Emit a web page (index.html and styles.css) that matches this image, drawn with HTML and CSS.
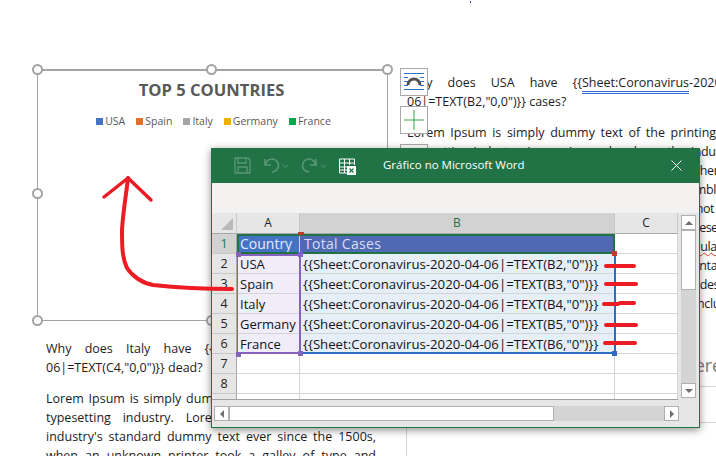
FILE: index.html
```html
<!DOCTYPE html>
<html lang="pt">
<head>
<meta charset="utf-8">
<title>Gráfico no Microsoft Word</title>
<link rel="stylesheet" href="styles.css">
</head>
<body>
<div class="page">
  <span class="dot"></span>
  <main class="doc">
    <section class="col">
      <figure class="chart">
        <h2 class="chart-title">TOP 5 COUNTRIES</h2>
        <ul class="legend">
          <li><i class="sw s1"></i>USA</li>
          <li><i class="sw s2"></i>Spain</li>
          <li><i class="sw s3"></i>Italy</li>
          <li><i class="sw s4"></i>Germany</li>
          <li><i class="sw s5"></i>France</li>
        </ul>
        <i class="h h-tl"></i><i class="h h-tc"></i><i class="h h-tr"></i>
        <i class="h h-ml"></i><i class="h h-bl"></i><i class="h h-bc"></i>
        <div class="tools">
          <div class="tool">
            <svg width="26" height="26" viewBox="0 0 26 26"><path d="M3 4.500h20M3 8.500h4M19 8.500h4M3 12.500h4M19 12.500h4M3 16.500h4M19 16.500h4M3 20.500h20" stroke="#2f75c5" stroke-width="1" fill="none"/><path d="M7 16a6 6 0 0 1 12 0" stroke="#505050" stroke-width="3" fill="none"/></svg>
          </div>
          <div class="tool">
            <svg width="26" height="26" viewBox="0 0 26 26"><path d="M13 3v20M3 13h20" stroke="#3fa14a" stroke-width="1" fill="none"/></svg>
          </div>
          <div class="tool"></div>
        </div>
      </figure>
      <p class="just">Why does Italy have {{Sheet:Coronavirus-2020-04-06|=TEXT(C4,"0,0")}} dead?</p>
      <p class="just">Lorem Ipsum is simply dummy text of the printing and typesetting industry. Lorem Ipsum has been the industry's standard dummy text ever since the 1500s, when an unknown printer took a galley of type and scrambled it to make a type specimen book.</p>
    </section>
    <section class="col col-right">
      <p class="para first"><span class="ln">Why does USA have {{<span class="dbl">Sheet:Coronavirus</span>-2020-04-</span>06|=TEXT(B2,"0,0")}} cases?</p>
      <p class="para">
        <span class="ln">Lorem Ipsum is simply dummy text of the printing and</span>
        <span class="ln cond">typesetting industry. Lorem Ipsum has been the industry's</span>
        <span class="ln cond">standard dummy text ever since the 1500s, when an</span>
        <span class="ln cond">unknown printer took a galley of type and scrambled it</span>
        <span class="ln cond">to make a type specimen book. It has survived not only</span>
        <span class="ln cond2">five centuries, but also the leap into electronic typesetting,</span>
        <span class="ln cond">remaining essentially unchanged. It was <span class="wavy">popularised</span></span>
        <span class="ln cond">in the 1960s with the release of Letraset sheets containing</span>
        <span class="ln cond">Lorem Ipsum passages, and more recently with desktop</span>
        <span class="ln cond">publishing software like Aldus PageMaker including</span>
        <span class="cond">versions of Lorem Ipsum.</span>
      </p>
      <h3 class="heading">Where</h3>
      <div class="tbl">
        <div class="tr"></div>
        <div class="tr"></div>
        <div class="tr small">- -</div>
      </div>
    </section>
  </main>

  <div class="win">
    <header class="titlebar">
      <div class="qat">
        <svg width="17" height="17" viewBox="0 0 17 17" class="dim"><path d="M1 1h13l2 2v13H1zM4 1v5h8V1M4 16v-6h9v6" fill="none" stroke="#5a9777" stroke-width="1.300"/></svg>
        <svg class="dim undo" width="26" height="17" viewBox="0 0 26 17"><path d="M2 2v6h6M2.500 8A6.500 6.500 0 1 1 9 15" fill="none" stroke="#5a9777" stroke-width="1.600"/><path d="M20 8l2.500 2.500L25 8" fill="none" stroke="#5a9777"/></svg>
        <svg class="dim redo" width="26" height="17" viewBox="0 0 26 17"><path d="M15 2v6H9M14.500 8A6.500 6.500 0 1 0 8 15" fill="none" stroke="#5a9777" stroke-width="1.600"/><path d="M20 8l2.500 2.500L25 8" fill="none" stroke="#5a9777"/></svg>
        <svg class="xl" width="17" height="17" viewBox="0 0 17 17"><path d="M.5 1h15v6M.5 1v14h8M.5 5h15M.5 9h8M.5 12h8M5.500 1v14M10.500 1v6" fill="none" stroke="#fff"/><rect x="8" y="8" width="9" height="9" fill="#fff"/><path d="M10.500 10.500l4 4M14.500 10.500l-4 4" stroke="#217346" stroke-width="1.200"/></svg>
      </div>
      <div class="wintitle">Gráfico no Microsoft Word</div>
      <svg class="close" width="11" height="11" viewBox="0 0 11 11"><path d="M.5.500l10 10M10.500.500l-10 10" stroke="#fff" fill="none"/></svg>
    </header>
    <div class="ribbon"></div>
    <div class="body">
      <div class="sheetwrap">
        <div class="sheet">
          <div class="hd corner"><span class="tri"></span></div>
          <div class="hd">A</div>
          <div class="hd sel">B</div>
          <div class="hd">C</div>

          <div class="rh sel">1</div>
          <div class="c head-a">Country</div>
          <div class="c head-b">Total Cases</div>
          <div class="c"></div>

          <div class="rh">2</div><div class="c ca">USA</div><div class="c cb">{{Sheet:Coronavirus-2020-04-06|=TEXT(B2,"0")}}</div><div class="c"></div>
          <div class="rh">3</div><div class="c ca">Spain</div><div class="c cb">{{Sheet:Coronavirus-2020-04-06|=TEXT(B3,"0")}}</div><div class="c"></div>
          <div class="rh">4</div><div class="c ca">Italy</div><div class="c cb">{{Sheet:Coronavirus-2020-04-06|=TEXT(B4,"0")}}</div><div class="c"></div>
          <div class="rh">5</div><div class="c ca">Germany</div><div class="c cb">{{Sheet:Coronavirus-2020-04-06|=TEXT(B5,"0")}}</div><div class="c"></div>
          <div class="rh">6</div><div class="c ca">France</div><div class="c cb">{{Sheet:Coronavirus-2020-04-06|=TEXT(B6,"0")}}</div><div class="c"></div>
          <div class="rh">7</div><div class="c"></div><div class="c"></div><div class="c"></div>
          <div class="rh">8</div><div class="c"></div><div class="c"></div><div class="c"></div>
          <div class="rh rest"></div><div class="c rest"></div><div class="c rest"></div><div class="c rest"></div>

          <div class="range r-green"></div>
          <div class="range r-purple"></div>
          <div class="range r-blue"></div>
          <i class="k k-red1"></i><i class="k k-red2"></i>
          <i class="k k-p1"></i><i class="k k-p2"></i><i class="k k-p3"></i><i class="k k-p4"></i>
          <i class="k k-b1"></i>
        </div>
        <div class="vscroll">
          <div class="sb-btn"><span class="arr up"></span></div>
          <div class="thumb-v"></div>
          <div class="track"></div>
          <div class="sb-btn"><span class="arr down"></span></div>
        </div>
      </div>
      <div class="hscroll">
        <div class="sb-btn"><span class="arr left"></span></div>
        <div class="thumb-h"></div>
        <div class="track"></div>
        <div class="sb-btn"><span class="arr right"></span></div>
      </div>
    </div>
  </div>

  <svg class="ink" width="716" height="456" viewBox="0 0 716 456">
    <g fill="none" stroke="#ed1c24" stroke-width="4" stroke-linecap="round" stroke-linejoin="round">
      <path d="M232 289C205 289 180 288 153 285C142 283 132 276 127 268C122 258 122 245 122 230C123 212 126 196 128 178"/>
      <path d="M104 197L128 178L151 200" stroke-width="3.500"/>
      <path d="M606 266H634M606 284H636M604 304H618M620 303H634M606 325H636M605 343H635"/>
    </g>
  </svg>
</div>
</body>
</html>
```
FILE: styles.css
```css
* { box-sizing: border-box; }
html, body { margin: 0; padding: 0; background: #fff; }
body { font-family: "Open Sans", "Noto Sans", sans-serif; color: #1c1c1c; }
.page { position: relative; width: 716px; height: 456px; overflow: hidden; }
.dot { position: absolute; left: 470px; top: 1px; width: 1px; height: 2px; background: #3a4fa8; }

.doc { display: grid; grid-template-columns: 330px 337px; column-gap: 31px; padding: 69px 0 0 46px; width: 800px; }
.col { min-width: 0; font-size: 12.500px; line-height: 19px; }
.just { margin: 0 0 12px; text-align: justify; }
.para { margin: 0 0 12px; }
.ln { display: block; text-align: justify; text-align-last: justify; }
.cond { letter-spacing: -.35px; }
.cond2 { letter-spacing: -.55px; }
.first { margin-top: 4px; }

.chart { position: relative; margin: 0 0 18px -9px; width: 351px; height: 252px; border: 1px solid #a3a3a3; border-top-width: 2px; padding-top: 8px; }
.chart-title { margin: 0; text-align: center; font-size: 16.600px; line-height: 22px; font-weight: 700; color: #595959; padding-right: 2px; }
.legend { list-style: none; margin: 13px 0 0; padding: 0 0 0 2px; display: flex; justify-content: center; gap: 11px; font-size: 10.500px; line-height: 14px; color: #595959; }
.legend li { display: flex; align-items: center; gap: 2px; }
.sw { width: 7px; height: 7px; display: block; }
.s1 { background: #4472c4; } .s2 { background: #e0702c; } .s3 { background: #a5a5a5; } .s4 { background: #eeb000; } .s5 { background: #00a84c; }

.h { position: absolute; width: 11px; height: 11px; border-radius: 50%; background: #fff; border: 2px solid #a3a3a3; }
.h-tl { left: -6px; top: -7px; } .h-tc { left: 168px; top: -7px; } .h-tr { left: 344px; top: -7px; }
.h-ml { left: -6px; top: 117px; } .h-bl { left: -6px; top: 244px; } .h-bc { left: 168px; top: 244px; }

.tools { position: absolute; left: 362px; top: -3px; display: flex; flex-direction: column; gap: 10px; }
.tool { width: 28px; height: 28px; background: #fff; border: 1px solid #a8a8a8; }
.tool svg { display: block; }

.dbl { border-bottom: 3px double #2b6ed9; }
.wavy { text-decoration: underline wavy #d83b2b 1px; }
.heading { margin: 21px 0 9px; font-size: 18px; line-height: 24px; font-weight: 400; color: #7a7a7a; padding-left: 260px; }
.tbl { border-left: 1px solid #d4d4d4; margin-left: -1px; }
.tr { height: 36px; border-top: 1px solid #d4d4d4; }
.small { font-size: 8px; line-height: 12px; padding: 20px 0 0 32px; color: #555; }

.win { position: absolute; left: 211px; top: 148px; width: 489px; height: 280px; display: flex; flex-direction: column; background: #e6e6e6; border: 1px solid #217346; border-top: 0; box-shadow: 0 2px 8px rgba(0,0,0,.45); }
.titlebar { height: 35px; flex: none; background: #217346; color: #fff; display: flex; align-items: center; position: relative; }
.qat { display: flex; align-items: center; padding-left: 22px; }
.qat .undo { margin-left: 12px; }
.qat .redo { margin-left: 12px; }
.qat .xl { margin-left: 12px; margin-top: 1px; }
.wintitle { margin-left: 27px; font-size: 11.500px; line-height: 16px; margin-top: -1px; }
.close { position: absolute; left: 459px; top: 12px; }
.ribbon { height: 30px; flex: none; background: #f3f2f1; }
.body { flex: 1; display: flex; flex-direction: column; }
.sheetwrap { display: flex; }
.sheet { position: relative; display: grid; grid-template-columns: 25px 63px 315px 63px; grid-template-rows: 21px repeat(8, 20px) 5px; width: 466px; border-bottom: 1px solid #a0a0a0; border-right: 1px solid #a0a0a0; }
.hd { background: #e6e6e6; border-right: 1px solid #c8c8c8; border-bottom: 1px solid #a8a8a8; font-size: 12px; line-height: 19px; text-align: center; color: #222; }
.hd.sel { background: #d2d2d2; color: #217346; }
.corner { position: relative; }
.tri { position: absolute; right: 3px; bottom: 3px; width: 0; height: 0; border-left: 12px solid transparent; border-bottom: 12px solid #b9b9b9; }
.rh { background: #e6e6e6; border-bottom: 1px solid #c8c8c8; border-right: 1px solid #a8a8a8; text-align: center; font-size: 12.500px; line-height: 20px; color: #222; }
.rh.sel { background: #d2d2d2; color: #217346; }
.c { background: #fff; border-right: 1px solid #d4d4d4; border-bottom: 1px solid #d4d4d4; font-size: 13.200px; line-height: 20px; padding-left: 3px; white-space: nowrap; color: #10141c; overflow: hidden; }
.rest { border-bottom: 0; }
.ca { background: #f1edf8; font-size: 13px; }
.cb { background: #e6eef8; }
.head-a { background: #4472c4; color: #e4ecfa; font-size: 14px; }
.head-b { background: #4f69b5; color: #d7dff5; font-size: 14px; letter-spacing: .3px; padding-left: 4px; }

.range { position: absolute; pointer-events: none; }
.r-green { left: 25px; top: 21px; width: 378px; height: 20px; border: 2px solid #217346; }
.r-purple { left: 25px; top: 41px; width: 64px; height: 100px; border: 2px solid #8462bd; border-left-width: 1px; }
.r-blue { left: 88px; top: 41px; width: 316px; height: 100px; border-right: 2px solid #2f6bc0; border-bottom: 2px solid #2f6bc0; border-left: 1px solid transparent; }
.k { position: absolute; width: 5px; height: 5px; }
.k-red1 { left: 86px; top: 19px; width: 6px; height: 3px; background: #c0392b; }
.k-red2 { left: 400px; top: 38px; width: 5px; height: 5px; background: #c0392b; }
.k-p1 { left: 24px; top: 39px; background: #8462bd; }
.k-p2 { left: 86px; top: 39px; background: #8462bd; }
.k-p3 { left: 24px; top: 139px; background: #8462bd; }
.k-p4 { left: 86px; top: 138px; background: #8462bd; }
.k-b1 { left: 400px; top: 138px; background: #2f6bc0; }

.vscroll { margin: 2px 0 0 3px; width: 15px; display: flex; flex-direction: column; height: 183px; background: #d4d4d4; }
.vscroll .track { flex: 1; }
.sb-btn { flex: none; width: 15px; height: 15px; background: #fff; border: 1px solid #b0b0b0; display: flex; align-items: center; justify-content: center; }
.thumb-v { height: 60px; background: #fff; border: 1px solid #b0b0b0; }
.arr { width: 0; height: 0; display: block; }
.up { border: 4px solid transparent; border-top: 0; border-bottom: 4px solid #6f6f6f; }
.down { border: 4px solid transparent; border-bottom: 0; border-top: 4px solid #6f6f6f; }
.left { border: 4px solid transparent; border-left: 0; border-right: 4px solid #6f6f6f; }
.right { border: 4px solid transparent; border-right: 0; border-left: 4px solid #6f6f6f; }

.hscroll { display: flex; margin: 6px 0 0 2px; width: 465px; height: 15px; background: #d4d4d4; }
.hscroll .track { flex: 1; }
.thumb-h { width: 325px; background: #fff; border: 1px solid #b0b0b0; }

.ink { position: absolute; left: 0; top: 0; pointer-events: none; }
```
